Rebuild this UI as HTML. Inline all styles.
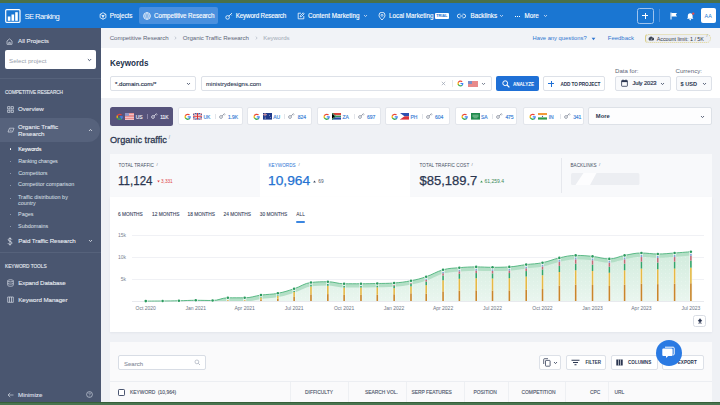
<!DOCTYPE html>
<html><head><meta charset="utf-8">
<style>
*{box-sizing:border-box;margin:0;padding:0}
html,body{width:720px;height:405px;overflow:hidden;background:#eff1f5;font-family:"Liberation Sans",sans-serif;position:relative}
.a{position:absolute}
.t{position:absolute;white-space:nowrap;line-height:1}
#gtop{left:0;top:0;width:720px;height:3px;background:#4a7049}
#gbot{left:0;top:402px;width:720px;height:3px;background:#497450;border-top:1px solid #36603a}
#hdr{left:0;top:3px;width:720px;height:25px;background:#1a76d2}
.nav{color:#fff;font-size:6.3px;-webkit-text-stroke:0.12px #fff}
#side{left:0;top:28px;width:101px;height:374px;background:#4a5670}
.sd{color:#e8ecf2;font-size:6.2px;-webkit-text-stroke:0.1px #e8ecf2}
.sub{color:#dfe4ec;font-size:5.45px}
.dot{position:absolute;width:1.2px;height:1.2px;border-radius:1px;background:#9ea8b9}
#crumb{left:101px;top:28px;width:619px;height:20px;background:#f1f3f7}
#wpan{left:101px;top:48px;width:619px;height:50px;background:#fff}
.box{position:absolute;background:#fff;border:1px solid #dde1e8;border-radius:2px}
.tab{position:absolute;top:107px;height:19px;background:#fff;border:1px solid #e3e6ec;border-radius:2px}
.btxt{color:#3a4a66;font-size:5.4px}
.blue{color:#2c74d4}
.lbl{color:#454e62;font-size:4.6px;letter-spacing:0.05px}
.hcol{color:#4d566a;font-size:4.9px;top:391.4px;-webkit-text-stroke:0.12px #4d566a}
.vdiv{position:absolute;top:382px;width:1px;height:20px;background:#eef0f3}
</style></head><body>
<div id="gtop" class="a"></div>

<!-- HEADER -->
<div id="hdr" class="a">
  <svg class="a" style="left:5px;top:5.5px" width="16" height="14" viewBox="0 0 16 14">
    <rect x="0.7" y="0.7" width="14.3" height="12.6" rx="1" fill="none" stroke="#fff" stroke-width="1.2"/>
    <rect x="2.8" y="7.5" width="2.6" height="4.3" fill="#fff"/>
    <rect x="6.5" y="5.5" width="2.6" height="6.3" fill="#fff"/>
    <rect x="10.2" y="3.2" width="2.6" height="8.6" fill="#fff"/>
  </svg>
  <div class="t" style="left:24.5px;top:9.8px;color:#fff;font-size:7.6px;letter-spacing:-0.55px">SE Ranking</div>
  <!-- nav -->
  <svg class="a" style="left:98.5px;top:8.8px" width="8" height="8" viewBox="0 0 8 8"><path d="M4 .7 L6.9 2.3 V5.7 L4 7.3 L1.1 5.7 V2.3Z" fill="none" stroke="#fff" stroke-width=".75"/><path d="M4 4 V7.3 M4 4 L1.1 2.3 M4 4 L6.9 2.3" fill="none" stroke="#fff" stroke-width=".6"/><circle cx="4" cy="4" r=".9" fill="#fff"/></svg>
  <div class="t nav" style="left:109.7px;top:10px">Projects</div>
  <div class="a" style="left:139px;top:4px;width:79px;height:17px;background:#4a90de;border-radius:2px"></div>
  <svg class="a" style="left:142.8px;top:8.8px" width="8" height="8" viewBox="0 0 8 8"><circle cx="4" cy="4" r="3.4" fill="none" stroke="#fff" stroke-width=".8"/><path d="M.8 3H7.2 M.8 5H7.2 M4 .6 C2.2 2.5 2.2 5.5 4 7.4 M4 .6 C5.8 2.5 5.8 5.5 4 7.4" fill="none" stroke="#fff" stroke-width=".55"/></svg>
  <div class="t nav" style="left:154px;top:10px;letter-spacing:-0.08px">Competitive Research</div>
  <svg class="a" style="left:225px;top:9px" width="8" height="8" viewBox="0 0 8 8"><circle cx="2.6" cy="5.4" r="1.8" fill="none" stroke="#fff" stroke-width=".8"/><path d="M3.9 4.1 L7 1 M5.6 2.4 L6.6 3.4" fill="none" stroke="#fff" stroke-width=".8"/></svg>
  <div class="t nav" style="left:235.7px;top:10px;letter-spacing:-0.17px">Keyword Research</div>
  <svg class="a" style="left:297px;top:9px" width="8" height="8" viewBox="0 0 8 8"><path d="M4 1.2H1.2V6.8H6.8V4 M3.2 4.8 L3.5 3.5 L6.2 .8 L7.2 1.8 L4.5 4.5Z" fill="none" stroke="#fff" stroke-width=".8"/></svg>
  <div class="t nav" style="left:308px;top:10px">Content Marketing</div>
  <svg class="a" style="left:363.2px;top:10.6px" width="5" height="4" viewBox="0 0 5 4"><path d="M1 1 L2.5 2.6 L4 1" fill="none" stroke="#d9e6f7" stroke-width=".8"/></svg>
  <svg class="a" style="left:377.5px;top:8.5px" width="8" height="9" viewBox="0 0 8 9"><path d="M4 8 C1.5 5.5 1 4.2 1 3.2 A3 3 0 0 1 7 3.2 C7 4.2 6.5 5.5 4 8Z" fill="none" stroke="#fff" stroke-width=".8"/><circle cx="4" cy="3.3" r="1" fill="none" stroke="#fff" stroke-width=".7"/></svg>
  <div class="t nav" style="left:389px;top:10px">Local Marketing</div>
  <div class="a" style="left:435px;top:10px;width:13.8px;height:5.8px;background:#fff;border-radius:1px"></div>
  <div class="t" style="left:436.3px;top:11.1px;font-size:3.9px;color:#1a76d2;font-weight:bold;letter-spacing:-0.1px">TRIAL</div>
  <svg class="a" style="left:457px;top:10px" width="9" height="6" viewBox="0 0 9 6"><path d="M3.5 1.2H2.2A1.8 1.8 0 0 0 2.2 4.8H3.5 M5.5 1.2H6.8A1.8 1.8 0 0 1 6.8 4.8H5.5 M3 3H6" fill="none" stroke="#fff" stroke-width=".8"/></svg>
  <div class="t nav" style="left:470.5px;top:10px">Backlinks</div>
  <svg class="a" style="left:499.3px;top:10.6px" width="5" height="4" viewBox="0 0 5 4"><path d="M1 1 L2.5 2.6 L4 1" fill="none" stroke="#d9e6f7" stroke-width=".8"/></svg>
  <div class="a" style="left:514.5px;top:12.5px;width:1.2px;height:1.2px;background:#fff"></div><div class="a" style="left:516.7px;top:12.5px;width:1.2px;height:1.2px;background:#fff"></div><div class="a" style="left:518.9px;top:12.5px;width:1.2px;height:1.2px;background:#fff"></div>
  <div class="t nav" style="left:524.5px;top:10px">More</div>
  <svg class="a" style="left:543px;top:10.6px" width="5" height="4" viewBox="0 0 5 4"><path d="M1 1 L2.5 2.6 L4 1" fill="none" stroke="#d9e6f7" stroke-width=".8"/></svg>
  <!-- right -->
  <div class="a" style="left:636.5px;top:5px;width:17px;height:15.5px;border:1px solid #9fc4ee;border-radius:2.5px"></div>
  <div class="a" style="left:641.8px;top:12.3px;width:6.5px;height:.9px;background:#fff"></div>
  <div class="a" style="left:644.6px;top:9.5px;width:.9px;height:6.5px;background:#fff"></div>
  <div class="a" style="left:658.5px;top:6px;width:1px;height:13px;background:#4b8fdc"></div>
  <svg class="a" style="left:669.5px;top:9px" width="8" height="8" viewBox="0 0 8 8"><path d="M1 .5V7.5" stroke="#fff" stroke-width="1"/><path d="M1.4 1H7L5.8 2.8L7 4.6H1.4Z" fill="#fff"/></svg>
  <svg class="a" style="left:686px;top:8.5px" width="9" height="9" viewBox="0 0 9 9"><path d="M4.2 1.2 C2.5 1.2 1.8 2.6 1.8 4 V5.8 L1 6.8 H7.4 L6.6 5.8 V4 C6.6 2.6 5.9 1.2 4.2 1.2Z" fill="#fff"/><circle cx="4.2" cy="7.6" r=".8" fill="#fff"/><circle cx="7.2" cy="1.6" r="1.2" fill="#e94c4c"/></svg>
  <div class="a" style="left:701px;top:5px;width:15px;height:15px;background:#fff;border-radius:2px"></div>
  <div class="t" style="left:704.6px;top:10.9px;font-size:5.4px;color:#1a76d2">AA</div>
</div>

<!-- SIDEBAR -->
<div id="side" class="a">
  <svg class="a" style="left:6px;top:9.5px" width="7" height="7" viewBox="0 0 7 7"><path d="M1 3 L3.5 .9 L6 3 V6.3 H1Z M2.8 6.3 V4.3 H4.2 V6.3" fill="none" stroke="#d5dbe5" stroke-width=".7"/></svg>
  <div class="t sd" style="left:18px;top:10px">All Projects</div>
  <div class="a" style="left:5px;top:22.2px;width:90.5px;height:19.3px;background:#fff;border-radius:2px"></div>
  <div class="t" style="left:9px;top:29.8px;font-size:6.2px;color:#979eab">Select project</div>
  <svg class="a" style="left:86.5px;top:30px" width="5" height="4" viewBox="0 0 5 4"><path d="M.9 1.1 L2.5 2.7 L4.1 1.1" fill="none" stroke="#4a5670" stroke-width="1"/></svg>
  <div class="a" style="left:0;top:49.8px;width:101px;height:1px;background:#56627b"></div>
  <div class="t" style="left:5px;top:62.6px;font-size:4.75px;color:#e3e8ef;letter-spacing:-0.1px;-webkit-text-stroke:0.12px #e3e8ef">COMPETITIVE RESEARCH</div>
  <svg class="a" style="left:6.5px;top:77.5px" width="7" height="7" viewBox="0 0 7 7"><rect x=".7" y=".7" width="2.2" height="2.2" fill="none" stroke="#d5dbe5" stroke-width=".7"/><rect x="4.1" y=".7" width="2.2" height="2.2" fill="none" stroke="#d5dbe5" stroke-width=".7"/><rect x=".7" y="4.1" width="2.2" height="2.2" fill="none" stroke="#d5dbe5" stroke-width=".7"/><rect x="4.1" y="4.1" width="2.2" height="2.2" fill="none" stroke="#d5dbe5" stroke-width=".7"/></svg>
  <div class="t sd" style="left:18px;top:78px">Overview</div>
  <div class="a" style="left:-12px;top:90px;width:112px;height:24px;background:#56627c;border-radius:12px"></div>
  <svg class="a" style="left:6.5px;top:99px" width="8" height="6" viewBox="0 0 8 6"><path d="M1 5 L2.5 1.2 H7 L5.5 5Z M3 3.2 L4.5 3.2" fill="none" stroke="#d5dbe5" stroke-width=".7"/></svg>
  <div class="t sd" style="left:18px;top:94.5px;line-height:7.5px;white-space:normal;width:60px">Organic Traffic Research</div>
  <svg class="a" style="left:88px;top:100px" width="5" height="4" viewBox="0 0 5 4"><path d="M1 3 L2.5 1.4 L4 3" fill="none" stroke="#dfe4ec" stroke-width=".8"/></svg>
  <div class="dot" style="left:9.5px;top:120px;background:#fff;width:1.8px;height:1.8px"></div>
  <div class="t sub" style="left:18.2px;top:118.9px;color:#fff;letter-spacing:-0.08px;-webkit-text-stroke:0.1px #fff">Keywords</div>
  <div class="dot" style="left:10px;top:132.6px"></div>
  <div class="t sub" style="left:18.2px;top:131.1px;letter-spacing:-0.17px">Ranking changes</div>
  <div class="dot" style="left:10px;top:144.6px"></div>
  <div class="t sub" style="left:18.2px;top:143.2px">Competitors</div>
  <div class="dot" style="left:10px;top:156.6px"></div>
  <div class="t sub" style="left:18px;top:154.3px">Competitor comparison</div>
  <div class="dot" style="left:10px;top:170px"></div>
  <div class="t sub" style="left:18px;top:165.5px;line-height:6px">Traffic distribution by<br>country</div>
  <div class="dot" style="left:10px;top:186px"></div>
  <div class="t sub" style="left:18px;top:183.6px">Pages</div>
  <div class="dot" style="left:10px;top:198px"></div>
  <div class="t sub" style="left:18px;top:195.6px">Subdomains</div>
  <svg class="a" style="left:7px;top:208.5px" width="6" height="9" viewBox="0 0 6 9"><path d="M4.8 2.6C4.6 1.8 3.9 1.5 3 1.5S1.2 1.9 1.2 2.8C1.2 4.6 4.9 3.8 4.9 5.9C4.9 6.9 4 7.4 3 7.4S1.2 7 1.1 6.1 M3 .4V8.5" fill="none" stroke="#dfe4ec" stroke-width=".75"/></svg>
  <div class="t sd" style="left:18.2px;top:210px;letter-spacing:-0.08px">Paid Traffic Research</div>
  <svg class="a" style="left:88px;top:211.2px" width="5" height="4" viewBox="0 0 5 4"><path d="M1 1 L2.5 2.6 L4 1" fill="none" stroke="#dfe4ec" stroke-width=".8"/></svg>
  <div class="a" style="left:0;top:224px;width:101px;height:1px;background:#56627b"></div>
  <div class="t" style="left:5px;top:237.2px;font-size:4.8px;color:#e3e8ef;letter-spacing:-0.05px;-webkit-text-stroke:0.12px #e3e8ef">KEYWORD TOOLS</div>
  <svg class="a" style="left:6.5px;top:251px" width="7" height="8" viewBox="0 0 7 8"><ellipse cx="3.5" cy="1.8" rx="2.8" ry="1.1" fill="none" stroke="#d5dbe5" stroke-width=".7"/><path d="M.7 1.8V6.2C.7 6.8 2 7.3 3.5 7.3S6.3 6.8 6.3 6.2V1.8 M.7 4C.7 4.6 2 5.1 3.5 5.1S6.3 4.6 6.3 4" fill="none" stroke="#d5dbe5" stroke-width=".7"/></svg>
  <div class="t sd" style="left:18.2px;top:251.9px;letter-spacing:-0.12px">Expand Database</div>
  <svg class="a" style="left:6.5px;top:268px" width="7" height="7" viewBox="0 0 7 7"><path d="M.7 6.3V1 H6.3V6.3Z M2.5 1V6.3 M4.5 1V6.3" fill="none" stroke="#d5dbe5" stroke-width=".7"/></svg>
  <div class="t sd" style="left:18.2px;top:269.3px;letter-spacing:-0.06px">Keyword Manager</div>
  <svg class="a" style="left:7px;top:364px" width="7" height="6" viewBox="0 0 7 6"><path d="M6.5 3H1 M3.2 .8 L1 3 L3.2 5.2" fill="none" stroke="#c9d0db" stroke-width=".7"/></svg>
  <div class="t sd" style="left:18px;top:363.8px;color:#d7dde6">Minimize</div>
  <svg class="a" style="left:85.5px;top:363px" width="7" height="7" viewBox="0 0 7 7"><circle cx="3.5" cy="3.5" r="2.9" fill="none" stroke="#c9d0db" stroke-width=".7"/><path d="M2.6 2.7 C2.6 1.8 4.4 1.8 4.4 2.7 C4.4 3.4 3.5 3.4 3.5 4.2" fill="none" stroke="#c9d0db" stroke-width=".6"/><circle cx="3.5" cy="5.1" r=".35" fill="#c9d0db"/></svg>
</div>

<!-- BREADCRUMB -->
<div id="crumb" class="a"></div>
<div class="t" style="left:109.7px;top:35.3px;font-size:6.1px;color:#5d6678;letter-spacing:-0.05px">Competitive Research</div>
<svg class="a" style="left:174.3px;top:35.9px" width="3" height="4" viewBox="0 0 3 4"><path d="M.7 .6L2.2 2L.7 3.4" fill="none" stroke="#a9b0bd" stroke-width=".6"/></svg>
<div class="t" style="left:182.8px;top:35.3px;font-size:6.1px;color:#5d6678;letter-spacing:-0.05px">Organic Traffic Research</div>
<svg class="a" style="left:254.8px;top:35.9px" width="3" height="4" viewBox="0 0 3 4"><path d="M.7 .6L2.2 2L.7 3.4" fill="none" stroke="#a9b0bd" stroke-width=".6"/></svg>
<div class="t" style="left:263.2px;top:35.3px;font-size:6.1px;color:#a2a9b6;letter-spacing:-0.05px">Keywords</div>
<div class="t blue" style="left:532.5px;top:36.1px;font-size:5.8px;color:#2f76d0">Have any questions?</div>
<svg class="a" style="left:591px;top:36.5px" width="5" height="4" viewBox="0 0 5 4"><path d="M.6 .8H4.4L2.5 3.2Z" fill="#2f76d0"/></svg>
<div class="t" style="left:607.8px;top:36.1px;font-size:5.95px;color:#2f76d0">Feedback</div>
<div class="a" style="left:645px;top:34.2px;width:66px;height:9.2px;background:#eceef2;border:.7px dotted #e0d690;border-radius:5px"></div>
<div class="a" style="left:645px;top:34.2px;width:3px;height:9.2px;border-left:1.2px solid #d9cf8c;border-radius:5px 0 0 5px"></div>
<svg class="a" style="left:647.8px;top:36px" width="6" height="5" viewBox="0 0 6 5"><path d="M1.2 4.5 A2 2 0 0 1 1.6 1.3 A2 2 0 0 1 4.6 1.6 A1.4 1.4 0 0 1 4.8 4.5Z" fill="#3c4454"/><path d="M3 4 L4 2.4" stroke="#fff" stroke-width=".5"/></svg>
<div class="t" style="left:656.7px;top:36.9px;font-size:5.35px;color:#2d3547">Account limit: 1 / 5K</div>
<div class="t" style="left:706.5px;top:34.5px;font-size:3.5px;color:#6d7584">/</div>

<!-- WHITE PANEL -->
<div id="wpan" class="a"></div>
<div class="t" style="left:109.7px;top:58.6px;font-size:9px;color:#22304a;font-weight:bold;transform:scaleX(0.895);transform-origin:0 0">Keywords</div>
<div class="box" style="left:110px;top:76px;width:85.5px;height:15px"></div>
<div class="t" style="left:115px;top:80.8px;font-size:6.1px;color:#2b3650;-webkit-text-stroke:0.15px #2b3650">*.domain.com/*</div>
<svg class="a" style="left:186px;top:81.7px" width="5" height="4" viewBox="0 0 5 4"><path d="M1 1 L2.5 2.6 L4 1" fill="none" stroke="#3a4560" stroke-width=".8"/></svg>
<div class="box" style="left:200.5px;top:76px;width:291px;height:15px"></div>
<div class="t" style="left:206px;top:80.8px;font-size:6.1px;color:#2b3650;-webkit-text-stroke:0.1px #2b3650">ministrydesigns.com</div>
<svg class="a" style="left:441px;top:81px" width="5" height="5" viewBox="0 0 5 5"><path d="M.8 .8L4.2 4.2M4.2 .8L.8 4.2" stroke="#9aa2b0" stroke-width=".7"/></svg>
<div class="a" style="left:452px;top:80px;width:1px;height:7px;background:#e4e7ec"></div>
<svg class="a" style="left:457px;top:80px" width="7" height="7" viewBox="0 0 24 24"><path d="M21.8 12.2c0-.7-.1-1.4-.2-2H12v3.9h5.5c-.2 1.3-1 2.4-2.1 3.1v2.6h3.3c2-1.8 3.1-4.5 3.1-7.6z" fill="#4285f4"/><path d="M12 22c2.8 0 5.1-.9 6.8-2.5l-3.3-2.6c-.9.6-2.1 1-3.5 1-2.7 0-5-1.8-5.8-4.3H2.8v2.7C4.5 19.7 8 22 12 22z" fill="#34a853"/><path d="M6.2 13.6c-.2-.6-.3-1.2-.3-1.9s.1-1.3.3-1.9V7.1H2.8C2.1 8.5 1.7 10.2 1.7 12s.4 3.5 1.1 4.9l3.4-2.7z" fill="#fbbc05"/><path d="M12 6c1.5 0 2.9.5 4 1.6l3-3C17.1 2.9 14.8 2 12 2 8 2 4.5 4.3 2.8 7.1l3.4 2.7C7 7.8 9.3 6 12 6z" fill="#ea4335"/></svg>
<div class="a" style="left:467.5px;top:80.5px;width:10px;height:6.5px;background:#e88a8a"></div>
<div class="a" style="left:467.5px;top:80.5px;width:4.5px;height:3.5px;background:#7c8fc7"></div>
<svg class="a" style="left:481px;top:81.8px" width="5" height="4" viewBox="0 0 5 4"><path d="M1 1 L2.5 2.6 L4 1" fill="none" stroke="#5a6478" stroke-width=".8"/></svg>
<div class="a" style="left:496px;top:76px;width:42.5px;height:15px;background:#1f70d6;border-radius:2px"></div>
<svg class="a" style="left:501.5px;top:79.5px" width="8" height="8" viewBox="0 0 8 8"><circle cx="3.2" cy="3.2" r="2.4" fill="none" stroke="#fff" stroke-width="1"/><path d="M5 5 L7.4 7.4" stroke="#fff" stroke-width="1.2"/></svg>
<div class="t" style="left:513px;top:82.9px;font-size:4.6px;color:#fff;font-weight:bold;letter-spacing:-0.05px">ANALYZE</div>
<div class="box" style="left:543px;top:76px;width:62px;height:15px"></div>
<div class="a" style="left:548px;top:83px;width:6px;height:1px;background:#1f70d6"></div>
<div class="a" style="left:550.5px;top:80.5px;width:1px;height:6px;background:#1f70d6"></div>
<div class="t" style="left:560.5px;top:82.8px;font-size:4.7px;color:#2b3650;font-weight:bold;letter-spacing:-0.12px">ADD TO PROJECT</div>
<div class="t" style="left:615px;top:68px;font-size:6.1px;color:#5d6678">Data for:</div>
<div class="box" style="left:615px;top:76px;width:55.5px;height:15px;background:#f9fafc"></div>
<svg class="a" style="left:620.5px;top:79px" width="7" height="8" viewBox="0 0 7 8"><rect x=".6" y="1.5" width="5.8" height="5.8" rx=".6" fill="none" stroke="#2b3650" stroke-width=".8"/><rect x=".6" y="1.5" width="5.8" height="1.6" fill="#2b3650"/><path d="M2 .4V2 M5 .4V2" stroke="#2b3650" stroke-width=".7"/></svg>
<div class="t" style="left:632.5px;top:81.4px;font-size:5.8px;color:#2b3650;-webkit-text-stroke:0.2px #2b3650;letter-spacing:-0.1px">July 2023</div>
<svg class="a" style="left:660px;top:81.5px" width="5" height="4" viewBox="0 0 5 4"><path d="M1 1 L2.5 2.6 L4 1" fill="none" stroke="#3a4560" stroke-width=".8"/></svg>
<div class="t" style="left:675.5px;top:68px;font-size:6.1px;color:#5d6678">Currency:</div>
<div class="box" style="left:675.5px;top:76px;width:36.5px;height:15px;background:#f9fafc"></div>
<div class="t" style="left:680.5px;top:81.6px;font-size:5.6px;color:#2b3650;font-weight:bold">$ USD</div>
<svg class="a" style="left:702px;top:81.5px" width="5" height="4" viewBox="0 0 5 4"><path d="M1 1 L2.5 2.6 L4 1" fill="none" stroke="#3a4560" stroke-width=".8"/></svg>

<!-- COUNTRY TABS -->
<div class="a" style="left:109.7px;top:107px;width:63.8px;height:18.8px;background:#56537b;border-radius:2.5px"></div>
<svg class="a" style="left:115.7px;top:112.6px" width="7.5" height="7.5" viewBox="0 0 24 24"><path d="M21.8 12.2c0-.7-.1-1.4-.2-2H12v3.9h5.5c-.2 1.3-1 2.4-2.1 3.1v2.6h3.3c2-1.8 3.1-4.5 3.1-7.6z" fill="#4285f4"/><path d="M12 22c2.8 0 5.1-.9 6.8-2.5l-3.3-2.6c-.9.6-2.1 1-3.5 1-2.7 0-5-1.8-5.8-4.3H2.8v2.7C4.5 19.7 8 22 12 22z" fill="#34a853"/><path d="M6.2 13.6c-.2-.6-.3-1.2-.3-1.9s.1-1.3.3-1.9V7.1H2.8C2.1 8.5 1.7 10.2 1.7 12s.4 3.5 1.1 4.9l3.4-2.7z" fill="#fbbc05"/><path d="M12 6c1.5 0 2.9.5 4 1.6l3-3C17.1 2.9 14.8 2 12 2 8 2 4.5 4.3 2.8 7.1l3.4 2.7C7 7.8 9.3 6 12 6z" fill="#ea4335"/></svg>
<div class="a" style="left:125.4px;top:113.2px;width:9px;height:6.6px;background:repeating-linear-gradient(#e88f92 0 .85px,#f3c2c4 .85px 1.7px)"></div><div class="a" style="left:125.4px;top:113.2px;width:4px;height:3px;background:#8f96c6"></div>
<div class="t" style="left:135.70px;top:114.9px;font-size:5px;color:#f0f0f6;letter-spacing:-0.1px;-webkit-text-stroke:0.15px #f0f0f6">US</div>
<div class="a" style="left:146.70px;top:113.5px;width:.8px;height:5.5px;background:#8a86a8"></div>
<svg class="a" style="left:150.7px;top:113.3px" width="7" height="6" viewBox="0 0 7 6"><circle cx="2" cy="4" r="1.4" fill="none" stroke="#eeeef5" stroke-width=".75"/><path d="M3 3 L5.6 .6 M4.6 1.5 L5.4 2.3 M5.4 .8 L6.2 1.6" fill="none" stroke="#eeeef5" stroke-width=".75"/></svg>
<div class="t" style="left:160.20px;top:114.9px;font-size:5px;color:#f0f0f6;letter-spacing:-0.1px;-webkit-text-stroke:0.15px #f0f0f6">11K</div>
<div class="tab" style="left:177.6px;width:65.5px;top:107.3px;height:18px"></div>
<svg class="a" style="left:183.6px;top:112.6px" width="7.5" height="7.5" viewBox="0 0 24 24"><path d="M21.8 12.2c0-.7-.1-1.4-.2-2H12v3.9h5.5c-.2 1.3-1 2.4-2.1 3.1v2.6h3.3c2-1.8 3.1-4.5 3.1-7.6z" fill="#4285f4"/><path d="M12 22c2.8 0 5.1-.9 6.8-2.5l-3.3-2.6c-.9.6-2.1 1-3.5 1-2.7 0-5-1.8-5.8-4.3H2.8v2.7C4.5 19.7 8 22 12 22z" fill="#34a853"/><path d="M6.2 13.6c-.2-.6-.3-1.2-.3-1.9s.1-1.3.3-1.9V7.1H2.8C2.1 8.5 1.7 10.2 1.7 12s.4 3.5 1.1 4.9l3.4-2.7z" fill="#fbbc05"/><path d="M12 6c1.5 0 2.9.5 4 1.6l3-3C17.1 2.9 14.8 2 12 2 8 2 4.5 4.3 2.8 7.1l3.4 2.7C7 7.8 9.3 6 12 6z" fill="#ea4335"/></svg>
<svg class="a" style="left:193.3px;top:113.2px" width="9" height="6.6" viewBox="0 0 9 6" preserveAspectRatio="none"><rect width="9" height="6" fill="#2a4a9a"/><path d="M0 0L9 6M9 0L0 6" stroke="#fff" stroke-width="1.3"/><path d="M0 0L9 6M9 0L0 6" stroke="#d33" stroke-width=".5"/><path d="M4.5 0V6M0 3H9" stroke="#fff" stroke-width="1.8"/><path d="M4.5 0V6M0 3H9" stroke="#d33" stroke-width="1"/></svg>
<div class="t" style="left:203.60px;top:114.9px;font-size:5px;color:#3a80d6;letter-spacing:-0.1px;-webkit-text-stroke:0.15px #3a80d6">UK</div>
<div class="a" style="left:214.60px;top:113.5px;width:.8px;height:5.5px;background:#e2e5ea"></div>
<svg class="a" style="left:218.6px;top:113.3px" width="7" height="6" viewBox="0 0 7 6"><circle cx="2" cy="4" r="1.4" fill="none" stroke="#7d8594" stroke-width=".75"/><path d="M3 3 L5.6 .6 M4.6 1.5 L5.4 2.3 M5.4 .8 L6.2 1.6" fill="none" stroke="#7d8594" stroke-width=".75"/></svg>
<div class="t" style="left:228.10px;top:114.9px;font-size:5px;color:#3a80d6;letter-spacing:-0.1px;-webkit-text-stroke:0.15px #3a80d6">1.9K</div>
<div class="tab" style="left:247.3px;width:65px;top:107.3px;height:18px"></div>
<svg class="a" style="left:253.3px;top:112.6px" width="7.5" height="7.5" viewBox="0 0 24 24"><path d="M21.8 12.2c0-.7-.1-1.4-.2-2H12v3.9h5.5c-.2 1.3-1 2.4-2.1 3.1v2.6h3.3c2-1.8 3.1-4.5 3.1-7.6z" fill="#4285f4"/><path d="M12 22c2.8 0 5.1-.9 6.8-2.5l-3.3-2.6c-.9.6-2.1 1-3.5 1-2.7 0-5-1.8-5.8-4.3H2.8v2.7C4.5 19.7 8 22 12 22z" fill="#34a853"/><path d="M6.2 13.6c-.2-.6-.3-1.2-.3-1.9s.1-1.3.3-1.9V7.1H2.8C2.1 8.5 1.7 10.2 1.7 12s.4 3.5 1.1 4.9l3.4-2.7z" fill="#fbbc05"/><path d="M12 6c1.5 0 2.9.5 4 1.6l3-3C17.1 2.9 14.8 2 12 2 8 2 4.5 4.3 2.8 7.1l3.4 2.7C7 7.8 9.3 6 12 6z" fill="#ea4335"/></svg>
<svg class="a" style="left:263.0px;top:113.2px" width="9" height="6.6" viewBox="0 0 9 6" preserveAspectRatio="none"><rect width="9" height="6" fill="#1f3a8a"/><path d="M0 1.5H4M2 0V3" stroke="#fff" stroke-width=".6"/><path d="M0 1.5H4M2 0V3" stroke="#d33" stroke-width=".3"/><circle cx="6.5" cy="2" r=".4" fill="#fff"/><circle cx="7.3" cy="4" r=".4" fill="#fff"/><circle cx="2.2" cy="4.6" r=".5" fill="#fff"/></svg>
<div class="t" style="left:273.30px;top:114.9px;font-size:5px;color:#3a80d6;letter-spacing:-0.1px;-webkit-text-stroke:0.15px #3a80d6">AU</div>
<div class="a" style="left:284.30px;top:113.5px;width:.8px;height:5.5px;background:#e2e5ea"></div>
<svg class="a" style="left:288.3px;top:113.3px" width="7" height="6" viewBox="0 0 7 6"><circle cx="2" cy="4" r="1.4" fill="none" stroke="#7d8594" stroke-width=".75"/><path d="M3 3 L5.6 .6 M4.6 1.5 L5.4 2.3 M5.4 .8 L6.2 1.6" fill="none" stroke="#7d8594" stroke-width=".75"/></svg>
<div class="t" style="left:297.80px;top:114.9px;font-size:5px;color:#3a80d6;letter-spacing:-0.1px;-webkit-text-stroke:0.15px #3a80d6">824</div>
<div class="tab" style="left:316.6px;width:64px;top:107.3px;height:18px"></div>
<svg class="a" style="left:322.6px;top:112.6px" width="7.5" height="7.5" viewBox="0 0 24 24"><path d="M21.8 12.2c0-.7-.1-1.4-.2-2H12v3.9h5.5c-.2 1.3-1 2.4-2.1 3.1v2.6h3.3c2-1.8 3.1-4.5 3.1-7.6z" fill="#4285f4"/><path d="M12 22c2.8 0 5.1-.9 6.8-2.5l-3.3-2.6c-.9.6-2.1 1-3.5 1-2.7 0-5-1.8-5.8-4.3H2.8v2.7C4.5 19.7 8 22 12 22z" fill="#34a853"/><path d="M6.2 13.6c-.2-.6-.3-1.2-.3-1.9s.1-1.3.3-1.9V7.1H2.8C2.1 8.5 1.7 10.2 1.7 12s.4 3.5 1.1 4.9l3.4-2.7z" fill="#fbbc05"/><path d="M12 6c1.5 0 2.9.5 4 1.6l3-3C17.1 2.9 14.8 2 12 2 8 2 4.5 4.3 2.8 7.1l3.4 2.7C7 7.8 9.3 6 12 6z" fill="#ea4335"/></svg>
<svg class="a" style="left:332.3px;top:113.2px" width="9" height="6.6" viewBox="0 0 9 6" preserveAspectRatio="none"><rect width="9" height="3" fill="#d8443a"/><rect y="3" width="9" height="3" fill="#2548a0"/><path d="M0 0L4 3L0 6" fill="#fff"/><path d="M0 .6L3.2 3L0 5.4" fill="#000"/><path d="M3 3H9" stroke="#fff" stroke-width="2"/><path d="M0 0L4 3L0 6" fill="none" stroke="#1a8a4a" stroke-width=".9"/><path d="M4 3H9" stroke="#1a8a4a" stroke-width="1.1"/></svg>
<div class="t" style="left:342.60px;top:114.9px;font-size:5px;color:#3a80d6;letter-spacing:-0.1px;-webkit-text-stroke:0.15px #3a80d6">ZA</div>
<div class="a" style="left:353.60px;top:113.5px;width:.8px;height:5.5px;background:#e2e5ea"></div>
<svg class="a" style="left:357.6px;top:113.3px" width="7" height="6" viewBox="0 0 7 6"><circle cx="2" cy="4" r="1.4" fill="none" stroke="#7d8594" stroke-width=".75"/><path d="M3 3 L5.6 .6 M4.6 1.5 L5.4 2.3 M5.4 .8 L6.2 1.6" fill="none" stroke="#7d8594" stroke-width=".75"/></svg>
<div class="t" style="left:367.10px;top:114.9px;font-size:5px;color:#3a80d6;letter-spacing:-0.1px;-webkit-text-stroke:0.15px #3a80d6">697</div>
<div class="tab" style="left:384.6px;width:65.4px;top:107.3px;height:18px"></div>
<svg class="a" style="left:390.6px;top:112.6px" width="7.5" height="7.5" viewBox="0 0 24 24"><path d="M21.8 12.2c0-.7-.1-1.4-.2-2H12v3.9h5.5c-.2 1.3-1 2.4-2.1 3.1v2.6h3.3c2-1.8 3.1-4.5 3.1-7.6z" fill="#4285f4"/><path d="M12 22c2.8 0 5.1-.9 6.8-2.5l-3.3-2.6c-.9.6-2.1 1-3.5 1-2.7 0-5-1.8-5.8-4.3H2.8v2.7C4.5 19.7 8 22 12 22z" fill="#34a853"/><path d="M6.2 13.6c-.2-.6-.3-1.2-.3-1.9s.1-1.3.3-1.9V7.1H2.8C2.1 8.5 1.7 10.2 1.7 12s.4 3.5 1.1 4.9l3.4-2.7z" fill="#fbbc05"/><path d="M12 6c1.5 0 2.9.5 4 1.6l3-3C17.1 2.9 14.8 2 12 2 8 2 4.5 4.3 2.8 7.1l3.4 2.7C7 7.8 9.3 6 12 6z" fill="#ea4335"/></svg>
<svg class="a" style="left:400.3px;top:113.2px" width="9" height="6.6" viewBox="0 0 9 6" preserveAspectRatio="none"><rect width="9" height="3" fill="#2b4fb0"/><rect y="3" width="9" height="3" fill="#d8333a"/><path d="M0 0L4.5 3L0 6Z" fill="#fff"/></svg>
<div class="t" style="left:410.60px;top:114.9px;font-size:5px;color:#3a80d6;letter-spacing:-0.1px;-webkit-text-stroke:0.15px #3a80d6">PH</div>
<div class="a" style="left:421.60px;top:113.5px;width:.8px;height:5.5px;background:#e2e5ea"></div>
<svg class="a" style="left:425.6px;top:113.3px" width="7" height="6" viewBox="0 0 7 6"><circle cx="2" cy="4" r="1.4" fill="none" stroke="#7d8594" stroke-width=".75"/><path d="M3 3 L5.6 .6 M4.6 1.5 L5.4 2.3 M5.4 .8 L6.2 1.6" fill="none" stroke="#7d8594" stroke-width=".75"/></svg>
<div class="t" style="left:435.10px;top:114.9px;font-size:5px;color:#3a80d6;letter-spacing:-0.1px;-webkit-text-stroke:0.15px #3a80d6">604</div>
<div class="tab" style="left:454.9px;width:62.5px;top:107.3px;height:18px"></div>
<svg class="a" style="left:460.9px;top:112.6px" width="7.5" height="7.5" viewBox="0 0 24 24"><path d="M21.8 12.2c0-.7-.1-1.4-.2-2H12v3.9h5.5c-.2 1.3-1 2.4-2.1 3.1v2.6h3.3c2-1.8 3.1-4.5 3.1-7.6z" fill="#4285f4"/><path d="M12 22c2.8 0 5.1-.9 6.8-2.5l-3.3-2.6c-.9.6-2.1 1-3.5 1-2.7 0-5-1.8-5.8-4.3H2.8v2.7C4.5 19.7 8 22 12 22z" fill="#34a853"/><path d="M6.2 13.6c-.2-.6-.3-1.2-.3-1.9s.1-1.3.3-1.9V7.1H2.8C2.1 8.5 1.7 10.2 1.7 12s.4 3.5 1.1 4.9l3.4-2.7z" fill="#fbbc05"/><path d="M12 6c1.5 0 2.9.5 4 1.6l3-3C17.1 2.9 14.8 2 12 2 8 2 4.5 4.3 2.8 7.1l3.4 2.7C7 7.8 9.3 6 12 6z" fill="#ea4335"/></svg>
<svg class="a" style="left:470.6px;top:113.2px" width="9" height="6.6" viewBox="0 0 9 6" preserveAspectRatio="none"><rect width="9" height="6" fill="#1e8a4c"/><path d="M1.5 2H7.5M1.5 3H7.5M2.5 4.3H6.5" stroke="#bfe6cc" stroke-width=".5"/></svg>
<div class="t" style="left:480.90px;top:114.9px;font-size:5px;color:#3a80d6;letter-spacing:-0.1px;-webkit-text-stroke:0.15px #3a80d6">SA</div>
<div class="a" style="left:491.90px;top:113.5px;width:.8px;height:5.5px;background:#e2e5ea"></div>
<svg class="a" style="left:495.9px;top:113.3px" width="7" height="6" viewBox="0 0 7 6"><circle cx="2" cy="4" r="1.4" fill="none" stroke="#7d8594" stroke-width=".75"/><path d="M3 3 L5.6 .6 M4.6 1.5 L5.4 2.3 M5.4 .8 L6.2 1.6" fill="none" stroke="#7d8594" stroke-width=".75"/></svg>
<div class="t" style="left:505.40px;top:114.9px;font-size:5px;color:#3a80d6;letter-spacing:-0.1px;-webkit-text-stroke:0.15px #3a80d6">475</div>
<div class="tab" style="left:522.7px;width:61.3px;top:107.3px;height:18px"></div>
<svg class="a" style="left:528.7px;top:112.6px" width="7.5" height="7.5" viewBox="0 0 24 24"><path d="M21.8 12.2c0-.7-.1-1.4-.2-2H12v3.9h5.5c-.2 1.3-1 2.4-2.1 3.1v2.6h3.3c2-1.8 3.1-4.5 3.1-7.6z" fill="#4285f4"/><path d="M12 22c2.8 0 5.1-.9 6.8-2.5l-3.3-2.6c-.9.6-2.1 1-3.5 1-2.7 0-5-1.8-5.8-4.3H2.8v2.7C4.5 19.7 8 22 12 22z" fill="#34a853"/><path d="M6.2 13.6c-.2-.6-.3-1.2-.3-1.9s.1-1.3.3-1.9V7.1H2.8C2.1 8.5 1.7 10.2 1.7 12s.4 3.5 1.1 4.9l3.4-2.7z" fill="#fbbc05"/><path d="M12 6c1.5 0 2.9.5 4 1.6l3-3C17.1 2.9 14.8 2 12 2 8 2 4.5 4.3 2.8 7.1l3.4 2.7C7 7.8 9.3 6 12 6z" fill="#ea4335"/></svg>
<svg class="a" style="left:538.4px;top:113.2px" width="9" height="6.6" viewBox="0 0 9 6" preserveAspectRatio="none"><rect width="9" height="2" fill="#f29b3a"/><rect y="2" width="9" height="2" fill="#fff"/><rect y="4" width="9" height="2" fill="#2f9a4a"/><circle cx="4.5" cy="3" r=".6" fill="#2b3c8c"/></svg>
<div class="t" style="left:548.70px;top:114.9px;font-size:5px;color:#3a80d6;letter-spacing:-0.1px;-webkit-text-stroke:0.15px #3a80d6">IN</div>
<div class="a" style="left:559.70px;top:113.5px;width:.8px;height:5.5px;background:#e2e5ea"></div>
<svg class="a" style="left:563.7px;top:113.3px" width="7" height="6" viewBox="0 0 7 6"><circle cx="2" cy="4" r="1.4" fill="none" stroke="#7d8594" stroke-width=".75"/><path d="M3 3 L5.6 .6 M4.6 1.5 L5.4 2.3 M5.4 .8 L6.2 1.6" fill="none" stroke="#7d8594" stroke-width=".75"/></svg>
<div class="t" style="left:573.20px;top:114.9px;font-size:5px;color:#3a80d6;letter-spacing:-0.1px;-webkit-text-stroke:0.15px #3a80d6">341</div>
<div class="tab" style="left:588.3px;width:124.2px;top:107.3px;height:18px;border-color:#dde1e7;background:#fdfdfe"></div>
<div class="t" style="left:595.8px;top:114.4px;font-size:5.8px;color:#2b3650;font-weight:bold">More</div>
<svg class="a" style="left:700px;top:114.5px" width="5" height="4" viewBox="0 0 5 4"><path d="M1 1 L2.5 2.6 L4 1" fill="none" stroke="#3a4560" stroke-width=".8"/></svg>

<!-- ORGANIC TRAFFIC -->
<div class="t" style="left:109.8px;top:134.6px;font-size:9.7px;color:#2b3650;transform:scaleX(0.945);transform-origin:0 0;-webkit-text-stroke:0.3px #2b3650">Organic traffic</div>
<div class="t" style="left:168.8px;top:135.8px;font-size:4.6px;color:#7a8294">/</div>

<!-- STATS -->
<div class="a" style="left:110px;top:154px;width:602px;height:43px;background:#f8f9fb"></div>
<div class="a" style="left:260px;top:154px;width:150px;height:45px;background:#fff"></div>
<div class="a" style="left:561px;top:158px;width:1px;height:35px;background:#e6e8ed"></div>
<div class="t lbl" style="left:118.5px;top:163.9px">TOTAL TRAFFIC</div><div class="t" style="left:156.5px;top:162.8px;font-size:4.4px;color:#6b7386">/</div>
<div class="t" style="left:117.7px;top:174.2px;font-size:13px;color:#2b3650;transform:scaleX(0.89);transform-origin:0 0;-webkit-text-stroke:0.25px #2b3650">11,124</div>
<svg class="a" style="left:157px;top:179.5px" width="3" height="3" viewBox="0 0 3 3"><path d="M.2 .6H2.8L1.5 2.6Z" fill="#e0474c"/></svg>
<div class="t" style="left:161px;top:179.6px;font-size:4.7px;color:#e0474c">3,331</div>
<div class="t lbl" style="left:268.5px;top:163.9px;color:#2c74d4">KEYWORDS</div><div class="t" style="left:298.5px;top:162.8px;font-size:4.4px;color:#6b7386">/</div>
<div class="t" style="left:268px;top:174.2px;font-size:13px;color:#2673d2;transform:scaleX(1.06);transform-origin:0 0;-webkit-text-stroke:0.25px #2673d2">10,964</div>
<svg class="a" style="left:313.2px;top:179.5px" width="3" height="3" viewBox="0 0 3 3"><path d="M.2 2.4H2.8L1.5 .4Z" fill="#3d4a62"/></svg>
<div class="t" style="left:318.3px;top:179.5px;font-size:4.8px;color:#4a5568">69</div>
<div class="t lbl" style="left:419.5px;top:163.9px">TOTAL TRAFFIC COST</div><div class="t" style="left:471.5px;top:162.8px;font-size:4.4px;color:#6b7386">/</div>
<div class="t" style="left:419.5px;top:174.2px;font-size:13px;color:#2b3650;transform:scaleX(1.0);transform-origin:0 0;-webkit-text-stroke:0.25px #2b3650">$85,189.7</div>
<svg class="a" style="left:480px;top:179.5px" width="3" height="3" viewBox="0 0 3 3"><path d="M.2 2.4H2.8L1.5 .4Z" fill="#3d9a5c"/></svg>
<div class="t" style="left:484.5px;top:179.4px;font-size:5px;color:#3b8a58">61,259.4</div>
<div class="t lbl" style="left:570.5px;top:163.9px">BACKLINKS</div><div class="t" style="left:599px;top:162.8px;font-size:4.4px;color:#6b7386">/</div>
<svg class="a" style="left:570.8px;top:173px" width="69" height="12" viewBox="0 0 69 12"><rect width="68.4" height="12" rx="1.5" fill="#eceef2"/><path d="M12.5 0H25.5L19 12H4.5Z" fill="#fdfdfe"/></svg>

<!-- CHART CARD -->
<div class="a" style="left:110px;top:197px;width:602px;height:135px;background:#fff;box-shadow:0 1px 2px rgba(40,50,80,0.06)"></div>
<div class="t" style="left:118px;top:213.3px;font-size:4.8px;color:#3a4560;-webkit-text-stroke:0.1px #3a4560">6 MONTHS</div>
<div class="t" style="left:152px;top:213.3px;font-size:4.8px;color:#3a4560;-webkit-text-stroke:0.1px #3a4560">12 MONTHS</div>
<div class="t" style="left:187.5px;top:213.3px;font-size:4.8px;color:#3a4560;-webkit-text-stroke:0.1px #3a4560">18 MONTHS</div>
<div class="t" style="left:223.5px;top:213.3px;font-size:4.8px;color:#3a4560;-webkit-text-stroke:0.1px #3a4560">24 MONTHS</div>
<div class="t" style="left:259.8px;top:213.3px;font-size:4.8px;color:#3a4560;-webkit-text-stroke:0.1px #3a4560">30 MONTHS</div>
<div class="t" style="left:296.3px;top:213.3px;font-size:4.8px;color:#1f2b44">ALL</div>
<div class="a" style="left:296px;top:221px;width:9px;height:1.5px;background:#3b86e0;border-radius:1px"></div>
<div class="t" style="left:117px;top:232.8px;font-size:5px;color:#7b8393;width:9px;text-align:right">15k</div>
<div class="t" style="left:117px;top:254.8px;font-size:5px;color:#7b8393;width:9px;text-align:right">10k</div>
<div class="t" style="left:117px;top:276.8px;font-size:5px;color:#7b8393;width:9px;text-align:right">5k</div>
<div class="t" style="left:125.75px;width:40px;text-align:center;top:306px;font-size:5px;color:#6d7585">Oct 2020</div>
<div class="t" style="left:175.75px;width:40px;text-align:center;top:306px;font-size:5px;color:#6d7585">Jan 2021</div>
<div class="t" style="left:224.67px;width:40px;text-align:center;top:306px;font-size:5px;color:#6d7585">Apr 2021</div>
<div class="t" style="left:274.13px;width:40px;text-align:center;top:306px;font-size:5px;color:#6d7585">Jul 2021</div>
<div class="t" style="left:324.13px;width:40px;text-align:center;top:306px;font-size:5px;color:#6d7585">Oct 2021</div>
<div class="t" style="left:374.14px;width:40px;text-align:center;top:306px;font-size:5px;color:#6d7585">Jan 2022</div>
<div class="t" style="left:423.06px;width:40px;text-align:center;top:306px;font-size:5px;color:#6d7585">Apr 2022</div>
<div class="t" style="left:472.52px;width:40px;text-align:center;top:306px;font-size:5px;color:#6d7585">Jul 2022</div>
<div class="t" style="left:522.52px;width:40px;text-align:center;top:306px;font-size:5px;color:#6d7585">Oct 2022</div>
<div class="t" style="left:572.52px;width:40px;text-align:center;top:306px;font-size:5px;color:#6d7585">Jan 2023</div>
<div class="t" style="left:621.44px;width:40px;text-align:center;top:306px;font-size:5px;color:#6d7585">Apr 2023</div>
<div class="t" style="left:670.90px;width:40px;text-align:center;top:306px;font-size:5px;color:#6d7585">Jul 2023</div>
<svg width="720" height="405" style="position:absolute;left:0;top:0">
<defs><linearGradient id="ga" gradientUnits="userSpaceOnUse" x1="0" y1="250" x2="0" y2="301"><stop offset="0" stop-color="#d0ebdc"/><stop offset="1" stop-color="#eaf6ef"/></linearGradient><pattern id="dots" width="4" height="4" patternUnits="userSpaceOnUse"><rect x="1" y="1" width="1" height="1" fill="#ffffff" opacity="0.22"/></pattern></defs>
<line x1="132" y1="235.5" x2="704" y2="235.5" stroke="#eceef2" stroke-width="0.8"/>
<line x1="132" y1="257.5" x2="704" y2="257.5" stroke="#eceef2" stroke-width="0.8"/>
<line x1="132" y1="279.5" x2="704" y2="279.5" stroke="#eceef2" stroke-width="0.8"/>
<line x1="132" y1="301.5" x2="704" y2="301.5" stroke="#e2e5ea" stroke-width="0.8"/>
<path d="M145.75,301.10 C145.75,301.10 155.86,301.06 162.60,301.00 C169.12,300.94 172.38,300.94 178.90,300.80 C185.64,300.66 189.01,300.30 195.75,300.30 C202.49,300.30 205.86,300.50 212.60,300.50 C218.69,300.50 221.73,297.80 227.82,297.80 C234.56,297.80 237.93,297.80 244.67,297.80 C251.19,297.80 254.45,295.99 260.98,295.10 C267.72,294.19 271.09,294.59 277.83,293.30 C284.35,292.05 287.61,290.87 294.13,288.75 C300.87,286.55 304.24,283.25 310.98,282.50 C317.72,281.75 321.09,281.75 327.83,281.75 C334.35,281.75 337.61,283.75 344.13,283.75 C350.87,283.75 354.24,283.75 360.98,283.75 C367.51,283.75 370.77,283.65 377.29,283.50 C384.03,283.35 387.40,283.50 394.14,283.00 C400.88,282.50 404.25,282.07 410.99,280.75 C417.07,279.55 420.12,278.78 426.21,276.70 C432.95,274.40 436.32,271.63 443.06,269.80 C449.58,268.03 452.84,268.27 459.36,267.70 C466.10,267.11 469.47,266.90 476.21,266.90 C482.73,266.90 485.99,267.30 492.52,267.30 C499.26,267.30 502.62,267.30 509.36,266.90 C516.10,266.50 519.47,265.45 526.21,264.60 C532.74,263.77 536.00,264.02 542.52,262.70 C549.26,261.34 552.63,259.38 559.37,257.90 C565.89,256.46 569.15,255.40 575.67,255.40 C582.41,255.40 585.78,255.70 592.52,256.40 C599.26,257.10 602.63,258.90 609.37,258.90 C615.46,258.90 618.50,256.52 624.59,255.40 C631.33,254.16 634.70,253.00 641.44,253.00 C647.96,253.00 651.22,254.00 657.75,254.00 C664.48,254.00 667.85,253.47 674.59,253.00 C681.12,252.55 690.90,251.70 690.90,251.70 L690.90,301.0 L145.75,301.0Z" fill="url(#ga)"/>
<path d="M145.75,301.10 C145.75,301.10 155.86,301.06 162.60,301.00 C169.12,300.94 172.38,300.94 178.90,300.80 C185.64,300.66 189.01,300.30 195.75,300.30 C202.49,300.30 205.86,300.50 212.60,300.50 C218.69,300.50 221.73,297.80 227.82,297.80 C234.56,297.80 237.93,297.80 244.67,297.80 C251.19,297.80 254.45,295.99 260.98,295.10 C267.72,294.19 271.09,294.59 277.83,293.30 C284.35,292.05 287.61,290.87 294.13,288.75 C300.87,286.55 304.24,283.25 310.98,282.50 C317.72,281.75 321.09,281.75 327.83,281.75 C334.35,281.75 337.61,283.75 344.13,283.75 C350.87,283.75 354.24,283.75 360.98,283.75 C367.51,283.75 370.77,283.65 377.29,283.50 C384.03,283.35 387.40,283.50 394.14,283.00 C400.88,282.50 404.25,282.07 410.99,280.75 C417.07,279.55 420.12,278.78 426.21,276.70 C432.95,274.40 436.32,271.63 443.06,269.80 C449.58,268.03 452.84,268.27 459.36,267.70 C466.10,267.11 469.47,266.90 476.21,266.90 C482.73,266.90 485.99,267.30 492.52,267.30 C499.26,267.30 502.62,267.30 509.36,266.90 C516.10,266.50 519.47,265.45 526.21,264.60 C532.74,263.77 536.00,264.02 542.52,262.70 C549.26,261.34 552.63,259.38 559.37,257.90 C565.89,256.46 569.15,255.40 575.67,255.40 C582.41,255.40 585.78,255.70 592.52,256.40 C599.26,257.10 602.63,258.90 609.37,258.90 C615.46,258.90 618.50,256.52 624.59,255.40 C631.33,254.16 634.70,253.00 641.44,253.00 C647.96,253.00 651.22,254.00 657.75,254.00 C664.48,254.00 667.85,253.47 674.59,253.00 C681.12,252.55 690.90,251.70 690.90,251.70 L690.90,301.0 L145.75,301.0Z" fill="url(#dots)"/>
<clipPath id="cl"><path d="M145.75,301.10 C145.75,301.10 155.86,301.06 162.60,301.00 C169.12,300.94 172.38,300.94 178.90,300.80 C185.64,300.66 189.01,300.30 195.75,300.30 C202.49,300.30 205.86,300.50 212.60,300.50 C218.69,300.50 221.73,297.80 227.82,297.80 C234.56,297.80 237.93,297.80 244.67,297.80 C251.19,297.80 254.45,295.99 260.98,295.10 C267.72,294.19 271.09,294.59 277.83,293.30 C284.35,292.05 287.61,290.87 294.13,288.75 C300.87,286.55 304.24,283.25 310.98,282.50 C317.72,281.75 321.09,281.75 327.83,281.75 C334.35,281.75 337.61,283.75 344.13,283.75 C350.87,283.75 354.24,283.75 360.98,283.75 C367.51,283.75 370.77,283.65 377.29,283.50 C384.03,283.35 387.40,283.50 394.14,283.00 C400.88,282.50 404.25,282.07 410.99,280.75 C417.07,279.55 420.12,278.78 426.21,276.70 C432.95,274.40 436.32,271.63 443.06,269.80 C449.58,268.03 452.84,268.27 459.36,267.70 C466.10,267.11 469.47,266.90 476.21,266.90 C482.73,266.90 485.99,267.30 492.52,267.30 C499.26,267.30 502.62,267.30 509.36,266.90 C516.10,266.50 519.47,265.45 526.21,264.60 C532.74,263.77 536.00,264.02 542.52,262.70 C549.26,261.34 552.63,259.38 559.37,257.90 C565.89,256.46 569.15,255.40 575.67,255.40 C582.41,255.40 585.78,255.70 592.52,256.40 C599.26,257.10 602.63,258.90 609.37,258.90 C615.46,258.90 618.50,256.52 624.59,255.40 C631.33,254.16 634.70,253.00 641.44,253.00 C647.96,253.00 651.22,254.00 657.75,254.00 C664.48,254.00 667.85,253.47 674.59,253.00 C681.12,252.55 690.90,251.70 690.90,251.70 L690.90,301.0 L145.75,301.0Z"/></clipPath>
<g clip-path="url(#cl)"><path d="M145.75,301.00 C145.75,301.00 155.86,301.00 162.60,301.00 C169.12,301.00 172.38,301.00 178.90,301.00 C185.64,301.00 189.01,301.00 195.75,301.00 C202.49,301.00 205.86,301.00 212.60,301.00 C218.69,301.00 221.73,300.80 227.82,300.80 C234.56,300.80 237.93,300.80 244.67,300.80 C251.19,300.80 254.45,298.99 260.98,298.10 C267.72,297.19 271.09,297.59 277.83,296.30 C284.35,295.05 287.61,293.87 294.13,291.75 C300.87,289.55 304.24,286.25 310.98,285.50 C317.72,284.75 321.09,284.75 327.83,284.75 C334.35,284.75 337.61,286.75 344.13,286.75 C350.87,286.75 354.24,286.75 360.98,286.75 C367.51,286.75 370.77,286.65 377.29,286.50 C384.03,286.35 387.40,286.50 394.14,286.00 C400.88,285.50 404.25,285.07 410.99,283.75 C417.07,282.55 420.12,281.78 426.21,279.70 C432.95,277.40 436.32,274.63 443.06,272.80 C449.58,271.03 452.84,271.27 459.36,270.70 C466.10,270.11 469.47,269.90 476.21,269.90 C482.73,269.90 485.99,270.30 492.52,270.30 C499.26,270.30 502.62,270.30 509.36,269.90 C516.10,269.50 519.47,268.45 526.21,267.60 C532.74,266.77 536.00,267.02 542.52,265.70 C549.26,264.34 552.63,262.38 559.37,260.90 C565.89,259.46 569.15,258.40 575.67,258.40 C582.41,258.40 585.78,258.70 592.52,259.40 C599.26,260.10 602.63,261.90 609.37,261.90 C615.46,261.90 618.50,259.52 624.59,258.40 C631.33,257.16 634.70,256.00 641.44,256.00 C647.96,256.00 651.22,257.00 657.75,257.00 C664.48,257.00 667.85,256.47 674.59,256.00 C681.12,255.55 690.90,254.70 690.90,254.70" fill="none" stroke="#b3dfc6" stroke-width="4" transform="translate(0,-1.2)"/></g>
<rect x="226.32" y="299.30" width="3" height="1.70" fill="#f4faf6" opacity="0.9"/>
<rect x="227.02" y="300.52" width="1.6" height="0.48" fill="#c9862b"/>
<rect x="227.02" y="299.94" width="1.6" height="0.58" fill="#e5b945"/>
<rect x="227.02" y="299.80" width="1.6" height="0.14" fill="#33a56a"/>
<rect x="227.02" y="299.80" width="1.6" height="0.00" fill="#c46a78"/>
<rect x="227.02" y="299.80" width="1.6" height="0.00" fill="#7fa3d6"/>
<rect x="243.17" y="299.30" width="3" height="1.70" fill="#f4faf6" opacity="0.9"/>
<rect x="243.87" y="300.52" width="1.6" height="0.48" fill="#c9862b"/>
<rect x="243.87" y="299.94" width="1.6" height="0.58" fill="#e5b945"/>
<rect x="243.87" y="299.80" width="1.6" height="0.14" fill="#33a56a"/>
<rect x="243.87" y="299.80" width="1.6" height="0.00" fill="#c46a78"/>
<rect x="243.87" y="299.80" width="1.6" height="0.00" fill="#7fa3d6"/>
<rect x="259.48" y="296.60" width="3" height="4.40" fill="#f4faf6" opacity="0.9"/>
<rect x="260.18" y="299.44" width="1.6" height="1.56" fill="#c9862b"/>
<rect x="260.18" y="297.57" width="1.6" height="1.87" fill="#e5b945"/>
<rect x="260.18" y="297.10" width="1.6" height="0.47" fill="#33a56a"/>
<rect x="260.18" y="297.10" width="1.6" height="0.00" fill="#c46a78"/>
<rect x="260.18" y="297.10" width="1.6" height="0.00" fill="#7fa3d6"/>
<rect x="276.33" y="294.80" width="3" height="6.20" fill="#f4faf6" opacity="0.9"/>
<rect x="277.03" y="298.72" width="1.6" height="2.28" fill="#c9862b"/>
<rect x="277.03" y="295.98" width="1.6" height="2.74" fill="#e5b945"/>
<rect x="277.03" y="295.30" width="1.6" height="0.68" fill="#33a56a"/>
<rect x="277.03" y="295.30" width="1.6" height="0.00" fill="#c46a78"/>
<rect x="277.03" y="295.30" width="1.6" height="0.00" fill="#7fa3d6"/>
<rect x="292.63" y="290.25" width="3" height="10.75" fill="#f4faf6" opacity="0.9"/>
<rect x="293.33" y="296.90" width="1.6" height="4.10" fill="#c9862b"/>
<rect x="293.33" y="291.98" width="1.6" height="4.92" fill="#e5b945"/>
<rect x="293.33" y="290.75" width="1.6" height="1.23" fill="#33a56a"/>
<rect x="293.33" y="290.75" width="1.6" height="0.00" fill="#c46a78"/>
<rect x="293.33" y="290.75" width="1.6" height="0.00" fill="#7fa3d6"/>
<rect x="309.48" y="284.00" width="3" height="17.00" fill="#f4faf6" opacity="0.9"/>
<rect x="310.18" y="294.40" width="1.6" height="6.60" fill="#c9862b"/>
<rect x="310.18" y="286.48" width="1.6" height="7.92" fill="#e5b945"/>
<rect x="310.18" y="284.50" width="1.6" height="1.98" fill="#33a56a"/>
<rect x="310.18" y="284.50" width="1.6" height="0.00" fill="#c46a78"/>
<rect x="310.18" y="284.50" width="1.6" height="0.00" fill="#7fa3d6"/>
<rect x="326.33" y="283.25" width="3" height="17.75" fill="#f4faf6" opacity="0.9"/>
<rect x="327.03" y="294.10" width="1.6" height="6.90" fill="#c9862b"/>
<rect x="327.03" y="285.82" width="1.6" height="8.28" fill="#e5b945"/>
<rect x="327.03" y="283.75" width="1.6" height="2.07" fill="#33a56a"/>
<rect x="327.03" y="283.75" width="1.6" height="0.00" fill="#c46a78"/>
<rect x="327.03" y="283.75" width="1.6" height="0.00" fill="#7fa3d6"/>
<rect x="342.63" y="285.25" width="3" height="15.75" fill="#f4faf6" opacity="0.9"/>
<rect x="343.33" y="294.90" width="1.6" height="6.10" fill="#c9862b"/>
<rect x="343.33" y="287.58" width="1.6" height="7.32" fill="#e5b945"/>
<rect x="343.33" y="285.75" width="1.6" height="1.83" fill="#33a56a"/>
<rect x="343.33" y="285.75" width="1.6" height="0.00" fill="#c46a78"/>
<rect x="343.33" y="285.75" width="1.6" height="0.00" fill="#7fa3d6"/>
<rect x="359.48" y="285.25" width="3" height="15.75" fill="#f4faf6" opacity="0.9"/>
<rect x="360.18" y="294.90" width="1.6" height="6.10" fill="#c9862b"/>
<rect x="360.18" y="287.58" width="1.6" height="7.32" fill="#e5b945"/>
<rect x="360.18" y="285.75" width="1.6" height="1.83" fill="#33a56a"/>
<rect x="360.18" y="285.75" width="1.6" height="0.00" fill="#c46a78"/>
<rect x="360.18" y="285.75" width="1.6" height="0.00" fill="#7fa3d6"/>
<rect x="375.79" y="285.00" width="3" height="16.00" fill="#f4faf6" opacity="0.9"/>
<rect x="376.49" y="294.80" width="1.6" height="6.20" fill="#c9862b"/>
<rect x="376.49" y="287.36" width="1.6" height="7.44" fill="#e5b945"/>
<rect x="376.49" y="285.50" width="1.6" height="1.86" fill="#33a56a"/>
<rect x="376.49" y="285.50" width="1.6" height="0.00" fill="#c46a78"/>
<rect x="376.49" y="285.50" width="1.6" height="0.00" fill="#7fa3d6"/>
<rect x="392.64" y="284.50" width="3" height="16.50" fill="#f4faf6" opacity="0.9"/>
<rect x="393.34" y="294.28" width="1.6" height="6.72" fill="#c9862b"/>
<rect x="393.34" y="288.20" width="1.6" height="6.08" fill="#e5b945"/>
<rect x="393.34" y="285.80" width="1.6" height="2.40" fill="#33a56a"/>
<rect x="393.34" y="285.00" width="1.6" height="0.80" fill="#c46a78"/>
<rect x="393.34" y="285.00" width="1.6" height="0.00" fill="#7fa3d6"/>
<rect x="409.49" y="282.25" width="3" height="18.75" fill="#f4faf6" opacity="0.9"/>
<rect x="410.19" y="293.33" width="1.6" height="7.67" fill="#c9862b"/>
<rect x="410.19" y="286.40" width="1.6" height="6.94" fill="#e5b945"/>
<rect x="410.19" y="283.66" width="1.6" height="2.74" fill="#33a56a"/>
<rect x="410.19" y="282.75" width="1.6" height="0.91" fill="#c46a78"/>
<rect x="410.19" y="282.75" width="1.6" height="0.00" fill="#7fa3d6"/>
<rect x="424.71" y="278.20" width="3" height="22.80" fill="#f4faf6" opacity="0.9"/>
<rect x="425.41" y="293.64" width="1.6" height="7.36" fill="#c9862b"/>
<rect x="425.41" y="285.17" width="1.6" height="8.47" fill="#e5b945"/>
<rect x="425.41" y="281.60" width="1.6" height="3.57" fill="#33a56a"/>
<rect x="425.41" y="279.82" width="1.6" height="1.78" fill="#c46a78"/>
<rect x="425.41" y="278.70" width="1.6" height="1.12" fill="#7fa3d6"/>
<rect x="441.56" y="271.30" width="3" height="29.70" fill="#f4faf6" opacity="0.9"/>
<rect x="442.26" y="291.36" width="1.6" height="9.64" fill="#c9862b"/>
<rect x="442.26" y="280.27" width="1.6" height="11.10" fill="#e5b945"/>
<rect x="442.26" y="275.60" width="1.6" height="4.67" fill="#33a56a"/>
<rect x="442.26" y="273.26" width="1.6" height="2.34" fill="#c46a78"/>
<rect x="442.26" y="271.80" width="1.6" height="1.46" fill="#7fa3d6"/>
<rect x="457.86" y="269.20" width="3" height="31.80" fill="#f4faf6" opacity="0.9"/>
<rect x="458.56" y="290.67" width="1.6" height="10.33" fill="#c9862b"/>
<rect x="458.56" y="278.78" width="1.6" height="11.89" fill="#e5b945"/>
<rect x="458.56" y="273.77" width="1.6" height="5.01" fill="#33a56a"/>
<rect x="458.56" y="271.26" width="1.6" height="2.50" fill="#c46a78"/>
<rect x="458.56" y="269.70" width="1.6" height="1.57" fill="#7fa3d6"/>
<rect x="474.71" y="268.40" width="3" height="32.60" fill="#f4faf6" opacity="0.9"/>
<rect x="475.41" y="290.41" width="1.6" height="10.59" fill="#c9862b"/>
<rect x="475.41" y="278.21" width="1.6" height="12.20" fill="#e5b945"/>
<rect x="475.41" y="273.07" width="1.6" height="5.14" fill="#33a56a"/>
<rect x="475.41" y="270.50" width="1.6" height="2.57" fill="#c46a78"/>
<rect x="475.41" y="268.90" width="1.6" height="1.61" fill="#7fa3d6"/>
<rect x="491.02" y="268.80" width="3" height="32.20" fill="#f4faf6" opacity="0.9"/>
<rect x="491.72" y="290.54" width="1.6" height="10.46" fill="#c9862b"/>
<rect x="491.72" y="278.49" width="1.6" height="12.05" fill="#e5b945"/>
<rect x="491.72" y="273.42" width="1.6" height="5.07" fill="#33a56a"/>
<rect x="491.72" y="270.88" width="1.6" height="2.54" fill="#c46a78"/>
<rect x="491.72" y="269.30" width="1.6" height="1.58" fill="#7fa3d6"/>
<rect x="507.86" y="268.40" width="3" height="32.60" fill="#f4faf6" opacity="0.9"/>
<rect x="508.56" y="290.41" width="1.6" height="10.59" fill="#c9862b"/>
<rect x="508.56" y="278.21" width="1.6" height="12.20" fill="#e5b945"/>
<rect x="508.56" y="273.07" width="1.6" height="5.14" fill="#33a56a"/>
<rect x="508.56" y="270.50" width="1.6" height="2.57" fill="#c46a78"/>
<rect x="508.56" y="268.90" width="1.6" height="1.61" fill="#7fa3d6"/>
<rect x="524.71" y="266.10" width="3" height="34.90" fill="#f4faf6" opacity="0.9"/>
<rect x="525.41" y="289.65" width="1.6" height="11.35" fill="#c9862b"/>
<rect x="525.41" y="276.58" width="1.6" height="13.07" fill="#e5b945"/>
<rect x="525.41" y="271.07" width="1.6" height="5.50" fill="#33a56a"/>
<rect x="525.41" y="268.32" width="1.6" height="2.75" fill="#c46a78"/>
<rect x="525.41" y="266.60" width="1.6" height="1.72" fill="#7fa3d6"/>
<rect x="541.02" y="264.20" width="3" height="36.80" fill="#f4faf6" opacity="0.9"/>
<rect x="541.72" y="289.02" width="1.6" height="11.98" fill="#c9862b"/>
<rect x="541.72" y="275.23" width="1.6" height="13.79" fill="#e5b945"/>
<rect x="541.72" y="269.42" width="1.6" height="5.81" fill="#33a56a"/>
<rect x="541.72" y="266.52" width="1.6" height="2.90" fill="#c46a78"/>
<rect x="541.72" y="264.70" width="1.6" height="1.82" fill="#7fa3d6"/>
<rect x="557.87" y="259.40" width="3" height="41.60" fill="#f4faf6" opacity="0.9"/>
<rect x="558.57" y="285.59" width="1.6" height="15.41" fill="#c9862b"/>
<rect x="558.57" y="272.02" width="1.6" height="13.56" fill="#e5b945"/>
<rect x="558.57" y="265.86" width="1.6" height="6.17" fill="#33a56a"/>
<rect x="558.57" y="261.75" width="1.6" height="4.11" fill="#c46a78"/>
<rect x="558.57" y="259.90" width="1.6" height="1.85" fill="#7fa3d6"/>
<rect x="574.17" y="256.90" width="3" height="44.10" fill="#f4faf6" opacity="0.9"/>
<rect x="574.87" y="284.65" width="1.6" height="16.35" fill="#c9862b"/>
<rect x="574.87" y="270.26" width="1.6" height="14.39" fill="#e5b945"/>
<rect x="574.87" y="263.72" width="1.6" height="6.54" fill="#33a56a"/>
<rect x="574.87" y="259.36" width="1.6" height="4.36" fill="#c46a78"/>
<rect x="574.87" y="257.40" width="1.6" height="1.96" fill="#7fa3d6"/>
<rect x="591.02" y="257.90" width="3" height="43.10" fill="#f4faf6" opacity="0.9"/>
<rect x="591.72" y="285.02" width="1.6" height="15.98" fill="#c9862b"/>
<rect x="591.72" y="270.97" width="1.6" height="14.06" fill="#e5b945"/>
<rect x="591.72" y="264.58" width="1.6" height="6.39" fill="#33a56a"/>
<rect x="591.72" y="260.32" width="1.6" height="4.26" fill="#c46a78"/>
<rect x="591.72" y="258.40" width="1.6" height="1.92" fill="#7fa3d6"/>
<rect x="607.87" y="260.40" width="3" height="40.60" fill="#f4faf6" opacity="0.9"/>
<rect x="608.57" y="285.96" width="1.6" height="15.04" fill="#c9862b"/>
<rect x="608.57" y="272.73" width="1.6" height="13.23" fill="#e5b945"/>
<rect x="608.57" y="266.71" width="1.6" height="6.02" fill="#33a56a"/>
<rect x="608.57" y="262.70" width="1.6" height="4.01" fill="#c46a78"/>
<rect x="608.57" y="260.90" width="1.6" height="1.80" fill="#7fa3d6"/>
<rect x="623.09" y="256.90" width="3" height="44.10" fill="#f4faf6" opacity="0.9"/>
<rect x="623.79" y="284.65" width="1.6" height="16.35" fill="#c9862b"/>
<rect x="623.79" y="270.26" width="1.6" height="14.39" fill="#e5b945"/>
<rect x="623.79" y="263.72" width="1.6" height="6.54" fill="#33a56a"/>
<rect x="623.79" y="259.36" width="1.6" height="4.36" fill="#c46a78"/>
<rect x="623.79" y="257.40" width="1.6" height="1.96" fill="#7fa3d6"/>
<rect x="639.94" y="254.50" width="3" height="46.50" fill="#f4faf6" opacity="0.9"/>
<rect x="640.64" y="283.75" width="1.6" height="17.25" fill="#c9862b"/>
<rect x="640.64" y="268.57" width="1.6" height="15.18" fill="#e5b945"/>
<rect x="640.64" y="261.67" width="1.6" height="6.90" fill="#33a56a"/>
<rect x="640.64" y="257.07" width="1.6" height="4.60" fill="#c46a78"/>
<rect x="640.64" y="255.00" width="1.6" height="2.07" fill="#7fa3d6"/>
<rect x="656.25" y="255.50" width="3" height="45.50" fill="#f4faf6" opacity="0.9"/>
<rect x="656.95" y="284.12" width="1.6" height="16.88" fill="#c9862b"/>
<rect x="656.95" y="269.27" width="1.6" height="14.85" fill="#e5b945"/>
<rect x="656.95" y="262.52" width="1.6" height="6.75" fill="#33a56a"/>
<rect x="656.95" y="258.02" width="1.6" height="4.50" fill="#c46a78"/>
<rect x="656.95" y="256.00" width="1.6" height="2.02" fill="#7fa3d6"/>
<rect x="673.09" y="254.50" width="3" height="46.50" fill="#f4faf6" opacity="0.9"/>
<rect x="673.79" y="283.75" width="1.6" height="17.25" fill="#c9862b"/>
<rect x="673.79" y="268.57" width="1.6" height="15.18" fill="#e5b945"/>
<rect x="673.79" y="261.67" width="1.6" height="6.90" fill="#33a56a"/>
<rect x="673.79" y="257.07" width="1.6" height="4.60" fill="#c46a78"/>
<rect x="673.79" y="255.00" width="1.6" height="2.07" fill="#7fa3d6"/>
<rect x="689.40" y="253.20" width="3" height="47.80" fill="#f4faf6" opacity="0.9"/>
<rect x="690.10" y="283.26" width="1.6" height="17.74" fill="#c9862b"/>
<rect x="690.10" y="267.65" width="1.6" height="15.61" fill="#e5b945"/>
<rect x="690.10" y="260.56" width="1.6" height="7.10" fill="#33a56a"/>
<rect x="690.10" y="255.83" width="1.6" height="4.73" fill="#c46a78"/>
<rect x="690.10" y="253.70" width="1.6" height="2.13" fill="#7fa3d6"/>
<path d="M145.75,301.10 C145.75,301.10 155.86,301.06 162.60,301.00 C169.12,300.94 172.38,300.94 178.90,300.80 C185.64,300.66 189.01,300.30 195.75,300.30 C202.49,300.30 205.86,300.50 212.60,300.50 C218.69,300.50 221.73,297.80 227.82,297.80 C234.56,297.80 237.93,297.80 244.67,297.80 C251.19,297.80 254.45,295.99 260.98,295.10 C267.72,294.19 271.09,294.59 277.83,293.30 C284.35,292.05 287.61,290.87 294.13,288.75 C300.87,286.55 304.24,283.25 310.98,282.50 C317.72,281.75 321.09,281.75 327.83,281.75 C334.35,281.75 337.61,283.75 344.13,283.75 C350.87,283.75 354.24,283.75 360.98,283.75 C367.51,283.75 370.77,283.65 377.29,283.50 C384.03,283.35 387.40,283.50 394.14,283.00 C400.88,282.50 404.25,282.07 410.99,280.75 C417.07,279.55 420.12,278.78 426.21,276.70 C432.95,274.40 436.32,271.63 443.06,269.80 C449.58,268.03 452.84,268.27 459.36,267.70 C466.10,267.11 469.47,266.90 476.21,266.90 C482.73,266.90 485.99,267.30 492.52,267.30 C499.26,267.30 502.62,267.30 509.36,266.90 C516.10,266.50 519.47,265.45 526.21,264.60 C532.74,263.77 536.00,264.02 542.52,262.70 C549.26,261.34 552.63,259.38 559.37,257.90 C565.89,256.46 569.15,255.40 575.67,255.40 C582.41,255.40 585.78,255.70 592.52,256.40 C599.26,257.10 602.63,258.90 609.37,258.90 C615.46,258.90 618.50,256.52 624.59,255.40 C631.33,254.16 634.70,253.00 641.44,253.00 C647.96,253.00 651.22,254.00 657.75,254.00 C664.48,254.00 667.85,253.47 674.59,253.00 C681.12,252.55 690.90,251.70 690.90,251.70" fill="none" stroke="#4db37c" stroke-width="0.9"/>
<circle cx="145.75" cy="301.10" r="1.9" fill="#ffffff"/>
<circle cx="145.75" cy="301.10" r="1.3" fill="#2a9a5e"/>
<circle cx="162.60" cy="301.00" r="1.9" fill="#ffffff"/>
<circle cx="162.60" cy="301.00" r="1.3" fill="#2a9a5e"/>
<circle cx="178.90" cy="300.80" r="1.9" fill="#ffffff"/>
<circle cx="178.90" cy="300.80" r="1.3" fill="#2a9a5e"/>
<circle cx="195.75" cy="300.30" r="1.9" fill="#ffffff"/>
<circle cx="195.75" cy="300.30" r="1.3" fill="#2a9a5e"/>
<circle cx="212.60" cy="300.50" r="1.9" fill="#ffffff"/>
<circle cx="212.60" cy="300.50" r="1.3" fill="#2a9a5e"/>
<circle cx="227.82" cy="297.80" r="1.9" fill="#ffffff"/>
<circle cx="227.82" cy="297.80" r="1.3" fill="#2a9a5e"/>
<circle cx="244.67" cy="297.80" r="1.9" fill="#ffffff"/>
<circle cx="244.67" cy="297.80" r="1.3" fill="#2a9a5e"/>
<circle cx="260.98" cy="295.10" r="1.9" fill="#ffffff"/>
<circle cx="260.98" cy="295.10" r="1.3" fill="#2a9a5e"/>
<circle cx="277.83" cy="293.30" r="1.9" fill="#ffffff"/>
<circle cx="277.83" cy="293.30" r="1.3" fill="#2a9a5e"/>
<circle cx="294.13" cy="288.75" r="1.9" fill="#ffffff"/>
<circle cx="294.13" cy="288.75" r="1.3" fill="#2a9a5e"/>
<circle cx="310.98" cy="282.50" r="1.9" fill="#ffffff"/>
<circle cx="310.98" cy="282.50" r="1.3" fill="#2a9a5e"/>
<circle cx="327.83" cy="281.75" r="1.9" fill="#ffffff"/>
<circle cx="327.83" cy="281.75" r="1.3" fill="#2a9a5e"/>
<circle cx="344.13" cy="283.75" r="1.9" fill="#ffffff"/>
<circle cx="344.13" cy="283.75" r="1.3" fill="#2a9a5e"/>
<circle cx="360.98" cy="283.75" r="1.9" fill="#ffffff"/>
<circle cx="360.98" cy="283.75" r="1.3" fill="#2a9a5e"/>
<circle cx="377.29" cy="283.50" r="1.9" fill="#ffffff"/>
<circle cx="377.29" cy="283.50" r="1.3" fill="#2a9a5e"/>
<circle cx="394.14" cy="283.00" r="1.9" fill="#ffffff"/>
<circle cx="394.14" cy="283.00" r="1.3" fill="#2a9a5e"/>
<circle cx="410.99" cy="280.75" r="1.9" fill="#ffffff"/>
<circle cx="410.99" cy="280.75" r="1.3" fill="#2a9a5e"/>
<circle cx="426.21" cy="276.70" r="1.9" fill="#ffffff"/>
<circle cx="426.21" cy="276.70" r="1.3" fill="#2a9a5e"/>
<circle cx="443.06" cy="269.80" r="1.9" fill="#ffffff"/>
<circle cx="443.06" cy="269.80" r="1.3" fill="#2a9a5e"/>
<circle cx="459.36" cy="267.70" r="1.9" fill="#ffffff"/>
<circle cx="459.36" cy="267.70" r="1.3" fill="#2a9a5e"/>
<circle cx="476.21" cy="266.90" r="1.9" fill="#ffffff"/>
<circle cx="476.21" cy="266.90" r="1.3" fill="#2a9a5e"/>
<circle cx="492.52" cy="267.30" r="1.9" fill="#ffffff"/>
<circle cx="492.52" cy="267.30" r="1.3" fill="#2a9a5e"/>
<circle cx="509.36" cy="266.90" r="1.9" fill="#ffffff"/>
<circle cx="509.36" cy="266.90" r="1.3" fill="#2a9a5e"/>
<circle cx="526.21" cy="264.60" r="1.9" fill="#ffffff"/>
<circle cx="526.21" cy="264.60" r="1.3" fill="#2a9a5e"/>
<circle cx="542.52" cy="262.70" r="1.9" fill="#ffffff"/>
<circle cx="542.52" cy="262.70" r="1.3" fill="#2a9a5e"/>
<circle cx="559.37" cy="257.90" r="1.9" fill="#ffffff"/>
<circle cx="559.37" cy="257.90" r="1.3" fill="#2a9a5e"/>
<circle cx="575.67" cy="255.40" r="1.9" fill="#ffffff"/>
<circle cx="575.67" cy="255.40" r="1.3" fill="#2a9a5e"/>
<circle cx="592.52" cy="256.40" r="1.9" fill="#ffffff"/>
<circle cx="592.52" cy="256.40" r="1.3" fill="#2a9a5e"/>
<circle cx="609.37" cy="258.90" r="1.9" fill="#ffffff"/>
<circle cx="609.37" cy="258.90" r="1.3" fill="#2a9a5e"/>
<circle cx="624.59" cy="255.40" r="1.9" fill="#ffffff"/>
<circle cx="624.59" cy="255.40" r="1.3" fill="#2a9a5e"/>
<circle cx="641.44" cy="253.00" r="1.9" fill="#ffffff"/>
<circle cx="641.44" cy="253.00" r="1.3" fill="#2a9a5e"/>
<circle cx="657.75" cy="254.00" r="1.9" fill="#ffffff"/>
<circle cx="657.75" cy="254.00" r="1.3" fill="#2a9a5e"/>
<circle cx="674.59" cy="253.00" r="1.9" fill="#ffffff"/>
<circle cx="674.59" cy="253.00" r="1.3" fill="#2a9a5e"/>
<circle cx="690.90" cy="251.70" r="1.9" fill="#ffffff"/>
<circle cx="690.90" cy="251.70" r="1.3" fill="#2a9a5e"/>
</svg>
<div class="box" style="left:693px;top:314.8px;width:12.5px;height:11.8px;border-color:#d9dde4;border-radius:2.5px"></div>
<svg class="a" style="left:696.5px;top:317.5px" width="6" height="6" viewBox="0 0 6 6"><path d="M3 .6 L5 3 H3.8 V4.6 H2.2 V3 H1Z M1 5.4H5" fill="#2b3650" stroke="#2b3650" stroke-width=".4"/></svg>

<!-- TABLE CARD -->
<div class="a" style="left:110px;top:341.5px;width:602px;height:60px;background:#fafafb"></div>
<div class="box" style="left:118px;top:354.5px;width:87.5px;height:15px;background:#fff;border-color:#d8dde5"></div>
<div class="t" style="left:124px;top:360.6px;font-size:6px;color:#8a919e;-webkit-text-stroke:0.1px #8a919e">Search</div>
<svg class="a" style="left:194px;top:358.5px" width="7" height="7" viewBox="0 0 7 7"><circle cx="2.9" cy="2.9" r="1.9" fill="none" stroke="#a8afbb" stroke-width=".7"/><path d="M4.3 4.3 L6 6" stroke="#a8afbb" stroke-width=".8"/></svg>
<div class="box" style="left:538.5px;top:354.5px;width:22.5px;height:15px;background:#fff"></div>
<svg class="a" style="left:543px;top:357.5px" width="8" height="9" viewBox="0 0 8 9"><path d="M5 .7H1.5A.8.8 0 0 0 .7 1.5V6" fill="none" stroke="#2b3650" stroke-width=".75"/><rect x="2.5" y="2.4" width="4.6" height="5.8" rx=".6" fill="#fff" stroke="#2b3650" stroke-width=".75"/></svg>
<svg class="a" style="left:553px;top:360.5px" width="5" height="4" viewBox="0 0 5 4"><path d="M1 1 L2.5 2.6 L4 1" fill="none" stroke="#2b3650" stroke-width=".8"/></svg>
<div class="box" style="left:565.5px;top:354.5px;width:40.5px;height:15px;background:#fff"></div>
<svg class="a" style="left:571px;top:358.5px" width="9" height="7" viewBox="0 0 9 7"><path d="M.5 1.2H8.5 M2 3.5H7 M3.5 5.8H5.5" stroke="#2b3650" stroke-width="1.1"/></svg>
<div class="t" style="left:585.5px;top:360.5px;font-size:4.5px;color:#2b3650;font-weight:bold">FILTER</div>
<div class="box" style="left:610.5px;top:354.5px;width:47px;height:15px;background:#fff"></div>
<svg class="a" style="left:616px;top:358.5px" width="7" height="7" viewBox="0 0 7 7"><rect x=".3" y=".5" width="6.4" height="6" fill="#2b3650"/><path d="M2.5 .5V6.5 M4.5 .5V6.5" stroke="#fff" stroke-width=".6"/></svg>
<div class="t" style="left:628px;top:360.5px;font-size:4.6px;color:#2b3650;font-weight:bold">COLUMNS</div>
<div class="box" style="left:662px;top:354.5px;width:41.5px;height:15px;background:#fff"></div>
<div class="t" style="left:677.8px;top:360.5px;font-size:4.6px;color:#2b3650;font-weight:bold">EXPORT</div>
<div class="a" style="left:655.5px;top:339.5px;width:26px;height:26px;background:#2a7ae3;border-radius:50%"></div>
<svg class="a" style="left:661px;top:345px" width="15" height="15" viewBox="0 0 15 15"><path d="M4 2.2 H12.2 A1 1 0 0 1 13.2 3.2 V9 A1 1 0 0 1 12.2 10" fill="none" stroke="#fff" stroke-width="1"/><path d="M2.3 3.6 H10.6 A1 1 0 0 1 11.6 4.6 V10 A1 1 0 0 1 10.6 11 H7.2 L5 13 V11 H2.3 A1 1 0 0 1 1.3 10 V4.6 A1 1 0 0 1 2.3 3.6Z" fill="#fff"/></svg>
<div class="a" style="left:110px;top:381px;width:602px;height:1px;background:#eceef2"></div>
<div class="a" style="left:118px;top:389.3px;width:7px;height:7px;border:1px solid #4a5570;border-radius:1.2px;background:#fff"></div>
<div class="t hcol" style="left:130px">KEYWORD&nbsp;&nbsp;(10,964)</div>
<div class="vdiv" style="left:290px"></div>
<div class="t hcol" style="left:305px">DIFFICULTY</div>
<div class="vdiv" style="left:348px"></div>
<div class="t hcol" style="left:365px">SEARCH VOL.</div>
<div class="vdiv" style="left:406px"></div>
<div class="t hcol" style="left:411.5px">SERP FEATURES</div>
<div class="vdiv" style="left:464px"></div>
<div class="t hcol" style="left:473.5px">POSITION</div>
<div class="vdiv" style="left:508px"></div>
<div class="t hcol" style="left:521.5px">COMPETITION</div>
<div class="vdiv" style="left:565px"></div>
<div class="t hcol" style="left:590px">CPC</div>
<div class="vdiv" style="left:607.5px"></div>
<div class="t hcol" style="left:614.5px">URL</div>

<div id="gbot" class="a"></div>
</body></html>
